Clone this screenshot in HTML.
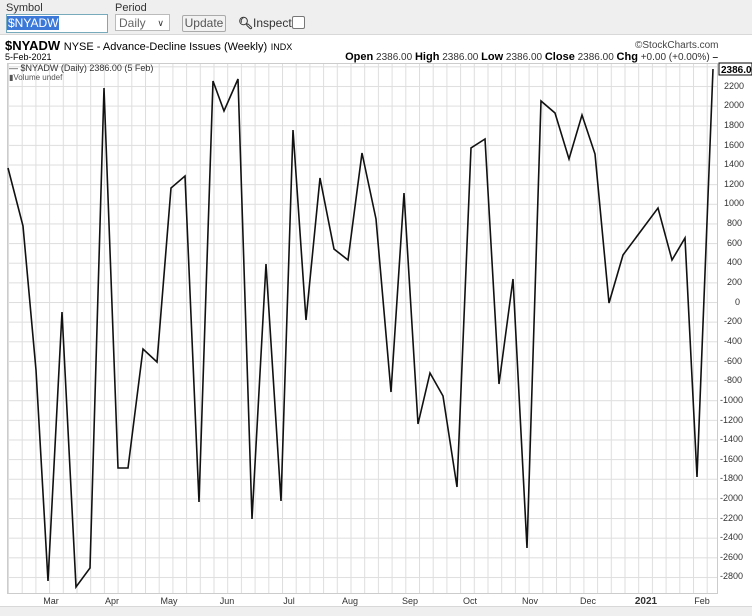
<!DOCTYPE html>
<html><head><meta charset="utf-8"><style>
body{margin:0;width:752px;height:615px;background:#fff;font-family:"Liberation Sans",sans-serif;position:relative;overflow:hidden}
.bar{position:absolute;left:0;top:0;width:752px;height:34px;background:#efefef;border-bottom:1px solid #d8d8d8}
.lbl{position:absolute;font-size:11px;color:#333}
.inp{position:absolute;border:1px solid #9ab;background:#fff;font-size:12px}
.btn{position:absolute;border:1px solid #aaa;background:#f2f2f2;font-size:12px;color:#555;border-radius:2px;text-align:center}
.bot{position:absolute;left:0;top:606px;width:752px;height:9px;background:#efefef;border-top:1px solid #d8d8d8}
</style></head><body>
<div class="bar"></div>
<div class="lbl" style="left:6px;top:2px">Symbol</div>
<div class="lbl" style="left:115px;top:2px">Period</div>
<div class="inp" style="left:6px;top:14px;width:100px;height:17px;border-color:#7ab"><span style="background:#3b78d8;color:#fff;padding:0 1px;line-height:17px">$NYADW</span></div>
<div class="inp" style="left:115px;top:14px;width:55px;height:17px;border-color:#bbb;color:#666;line-height:17px;padding-left:3px;box-sizing:border-box">Daily <span style="position:absolute;right:5px;font-size:9px;color:#333">&#x2228;</span></div>
<div class="btn" style="left:182px;top:15px;width:42px;height:15px;line-height:15px">Update</div>
<div class="lbl" style="left:238px;top:16px;font-size:12px;color:#333"><b style="font-size:12px">&#x1F50D;&#xFE0E;</b></div>
<div class="lbl" style="left:253px;top:16px;font-size:12px;color:#333">Inspect</div>
<div style="position:absolute;left:292px;top:16px;width:11px;height:11px;border:1px solid #777;border-radius:2px;background:#fff"></div>

<div style="position:absolute;left:5px;top:38px;font-size:13px;color:#000"><b>$NYADW</b> <span style="font-size:11px">NYSE - Advance-Decline Issues (Weekly)</span> <span style="font-size:9px">INDX</span></div>
<div style="position:absolute;left:5px;top:52px;font-size:9px">5-Feb-2021</div>
<div style="position:absolute;left:635px;top:40px;font-size:10px;color:#444">&#169;StockCharts.com</div>
<div style="position:absolute;right:34px;top:51px;font-size:10px;color:#333;white-space:nowrap"><b style="color:#000;font-size:11px">Open</b> 2386.00 <b style="color:#000;font-size:11px">High</b> 2386.00 <b style="color:#000;font-size:11px">Low</b> 2386.00 <b style="color:#000;font-size:11px">Close</b> 2386.00 <b style="color:#000;font-size:11px">Chg</b> +0.00 (+0.00%) <b>&#8211;</b></div>

<svg style="position:absolute;left:0;top:0" width="752" height="615">
<defs>
<pattern id="v" width="13.7" height="10" patternUnits="userSpaceOnUse" x="8"><line x1="0.5" y1="0" x2="0.5" y2="10" stroke="#dedede"/></pattern>
<pattern id="h" width="10" height="19.64" patternUnits="userSpaceOnUse" y="7.4"><line x1="0" y1="0.5" x2="10" y2="0.5" stroke="#dedede"/></pattern>
</defs>
<rect x="7" y="63" width="710" height="530" fill="url(#v)"/>
<rect x="7" y="63" width="710" height="530" fill="url(#h)"/>
<rect x="7.5" y="63.5" width="710" height="530" fill="none" stroke="#ccc"/>
<g font-size="9" fill="#333" font-family="Liberation Sans,sans-serif">
<text x="9" y="71">&#8212; $NYADW (Daily) 2386.00 (5 Feb)</text>
<text x="9" y="80" font-size="8" fill="#555">&#9646;Volume undef</text>
</g>
<g font-size="9" fill="#333" font-family="Liberation Sans,sans-serif" text-anchor="start">
<text x="724" y="89">2200</text><text x="724" y="108">2000</text><text x="724" y="128">1800</text><text x="724" y="148">1600</text><text x="724" y="167">1400</text><text x="724" y="187">1200</text><text x="724" y="206">1000</text><text x="727" y="226">800</text><text x="727" y="246">600</text><text x="727" y="265">400</text><text x="727" y="285">200</text><text x="735" y="305">0</text>
<text x="724" y="324">-200</text><text x="724" y="344">-400</text><text x="724" y="364">-600</text><text x="724" y="383">-800</text><text x="720" y="403">-1000</text><text x="720" y="423">-1200</text><text x="720" y="442">-1400</text><text x="720" y="462">-1600</text><text x="720" y="481">-1800</text><text x="720" y="501">-2000</text><text x="720" y="521">-2200</text><text x="720" y="540">-2400</text><text x="720" y="560">-2600</text><text x="720" y="579">-2800</text>
</g>
<rect x="719" y="63" width="33" height="12" fill="#fff" stroke="#000"/>
<text x="721" y="73" font-size="10" font-weight="bold" font-family="Liberation Sans,sans-serif">2386.00</text>
<g font-size="9" fill="#333" font-family="Liberation Sans,sans-serif" text-anchor="middle">
<text x="51" y="604">Mar</text><text x="112" y="604">Apr</text><text x="169" y="604">May</text><text x="227" y="604">Jun</text><text x="289" y="604">Jul</text><text x="350" y="604">Aug</text><text x="410" y="604">Sep</text><text x="470" y="604">Oct</text><text x="530" y="604">Nov</text><text x="588" y="604">Dec</text><text x="646" y="604" font-weight="bold" font-size="10">2021</text><text x="702" y="604">Feb</text>
</g>
<polyline fill="none" stroke="#111" stroke-width="1.6" points="8,168 23,226 36,370 48,581 62,312 76,587 90,568 104,88 118,468 128,468 143,349 157,362 171,188 185,176 199,502 213,81 224,111 238,79 252,519 266,264 281,501 293,130 306,320 320,178 334,249 348,260 362,153 376,219 391,392 404,193 418,424 430,373 443,396 457,487 471,148 485,139 499,384 513,279 527,548 541,101 555,113 569,159 582,115 595,154 609,303 623,255 658,208 672,260 685,238 697,477 713,69"/>
</svg>
<div class="bot"></div>
</body></html>
